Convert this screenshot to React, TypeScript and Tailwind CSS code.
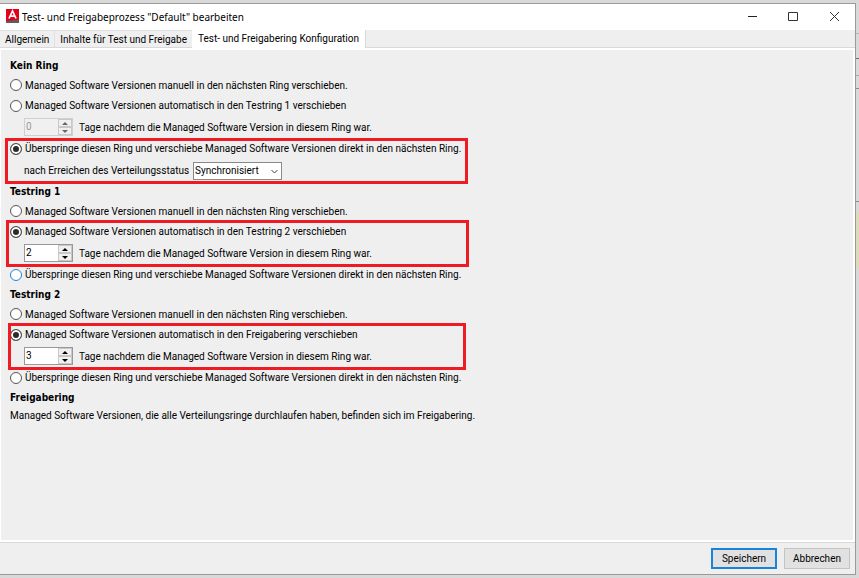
import { useState, type ReactNode } from 'react';

function Title() {
  return (
    <header className="flex h-[26px] shrink-0 items-center bg-white pl-[6px]">
      <svg width="13" height="14" viewBox="0 0 13 14" className="-mt-[2px]" aria-hidden="true">
        <path d="M0 0h13v11L0 13z" fill="#e2001a" />
        <path d="M0 12.2l13-1.6V14H0z" fill="#5c5c5c" />
        <path d="M3 9.5L6.5 2 10 9.5M4.4 7.2h4.2" fill="none" stroke="#fff" strokeWidth="1.7" />
      </svg>
      <h1 className="ml-[3px] flex-1 font-['Noto_Sans',sans-serif] leading-4 text-black">Test- und Freigabeprozess "Default" bearbeiten</h1>
      <button aria-label="Minimieren" className="flex h-full w-[41px] items-center justify-center">
        <svg width="11" height="11" viewBox="0 0 11 11"><path d="M1 4.5h9" stroke="#222" fill="none" /></svg>
      </button>
      <button aria-label="Maximieren" className="flex h-full w-[41px] items-center justify-center">
        <svg width="11" height="11" viewBox="0 0 11 11"><path d="M.5 .5h9v8h-9z" stroke="#333" fill="none" /></svg>
      </button>
      <button aria-label="Schließen" className="flex h-full w-[41px] items-center justify-center">
        <svg width="11" height="11" viewBox="0 0 11 11"><path d="M1 0l9 9M10 0l-9 9" stroke="#333" fill="none" /></svg>
      </button>
    </header>
  );
}

type RadioProps = { name: string; label: string; checked: boolean; onSelect: () => void; height: string; hot?: boolean };

function Radio({ name, label, checked, onSelect, height, hot }: RadioProps) {
  return (
    <label className={`flex items-center gap-[3px] ${height}`}>
      <input
        type="radio"
        name={name}
        checked={checked}
        onChange={onSelect}
        className={`size-3 shrink-0 appearance-none rounded-full border bg-white checked:bg-[#2b2b2b] checked:shadow-[inset_0_0_0_2px_#fff] ${hot ? 'border-[#1a86d9]' : 'border-[#555]'}`}
      />
      <span className="whitespace-nowrap">{label}</span>
    </label>
  );
}

function Days({ id, initial, disabled }: { id: string; initial: number; disabled?: boolean }) {
  const [value, setValue] = useState(initial);
  const step = 'flex h-[8px] w-[14px] items-center justify-center border border-[#c8c8c8] bg-[#f0f0f0]';
  const arrow = disabled ? '#666' : '#000';
  return (
    <div className="flex h-[22px] items-center gap-[6px] pl-[14px]">
      <div className={`flex h-[18px] w-[49px] border ${disabled ? 'border-[#d0d0d0] bg-[#f0f0f0]' : 'border-[#999] bg-white'}`}>
        <input
          id={id}
          value={value}
          disabled={disabled}
          onChange={(e) => setValue(Number(e.target.value) || 0)}
          className="w-0 flex-1 bg-transparent pl-px leading-4 disabled:text-[#9a9a9a]"
        />
        <div className="flex flex-col">
          <button aria-label="Mehr" disabled={disabled} className={step} onClick={() => setValue(value + 1)}>
            <svg width="6" height="3" viewBox="0 0 6 3"><path d="M0 3L3 0l3 3z" fill={arrow} /></svg>
          </button>
          <button aria-label="Weniger" disabled={disabled} className={step} onClick={() => setValue(Math.max(0, value - 1))}>
            <svg width="6" height="3" viewBox="0 0 6 3"><path d="M0 0h6L3 3z" fill={arrow} /></svg>
          </button>
        </div>
      </div>
      <label htmlFor={id} className="whitespace-nowrap">Tage nachdem die Managed Software Version in diesem Ring war.</label>
    </div>
  );
}

function StatusSelect() {
  return (
    <div className="flex h-[23px] items-center gap-1 pl-[14px]">
      <label htmlFor="status" className="whitespace-nowrap">nach Erreichen des Verteilungsstatus</label>
      <div className="relative">
        <select id="status" className="block h-[18px] w-[89px] appearance-none border border-[#8a8a8a] bg-white pl-px">
          <option>Synchronisiert</option>
          <option>Verteilt</option>
        </select>
        <svg width="7" height="5" viewBox="0 0 7 5" className="pointer-events-none absolute top-[7px] right-[4px]" aria-hidden="true">
          <path d="M.5 1l3 3 3-3" fill="none" stroke="#444" />
        </svg>
      </div>
    </div>
  );
}

function Marked({ frame, children }: { frame?: string; children: ReactNode }) {
  return (
    <div className="relative">
      {children}
      {frame && <div className={`pointer-events-none absolute border-3 border-[#ed1c24] ${frame}`} />}
    </div>
  );
}

function Heading({ children }: { children: ReactNode }) {
  return <h2 className="h-[19px] font-['DejaVu_Sans_Condensed',sans-serif] leading-[19px] font-bold">{children}</h2>;
}

type RingProps = { id: string; title: string; auto: string; initial: string; days: number; frame: string; hot?: boolean; children?: ReactNode };

function Ring({ id, title, auto, initial, days, frame, hot, children }: RingProps) {
  const [mode, setMode] = useState(initial);
  return (
    <section>
      <Heading>{title}</Heading>
      <Radio name={id} height="h-5" label="Managed Software Versionen manuell in den nächsten Ring verschieben." checked={mode === 'manual'} onSelect={() => setMode('manual')} />
      <Marked frame={children ? undefined : frame}>
        <Radio name={id} height="h-[21px]" label={auto} checked={mode === 'auto'} onSelect={() => setMode('auto')} />
        <Days id={`${id}-days`} initial={days} disabled={mode !== 'auto'} />
      </Marked>
      <Marked frame={children ? frame : undefined}>
        <Radio name={id} height="h-[21px]" hot={hot} label="Überspringe diesen Ring und verschiebe Managed Software Versionen direkt in den nächsten Ring." checked={mode === 'skip'} onSelect={() => setMode('skip')} />
        {children}
      </Marked>
    </section>
  );
}

export default function App() {
  return (
    <div className="flex min-h-screen bg-[#d9d9d9] pt-[3px] pb-[3px] font-['Roboto','Liberation_Sans',sans-serif] text-[10px] text-black">
      <main className="flex min-w-0 flex-1 flex-col border-t border-r border-b border-[#9a9a9a] bg-[#efefef]">
        <Title />
        <nav role="tablist" className="flex h-[18px] shrink-0 border-b border-[#d9d9d9]">
          <button role="tab" aria-selected="false" className="border-t border-r border-[#e0e0e0] px-[5px]">Allgemein</button>
          <button role="tab" aria-selected="false" className="border-t border-[#e0e0e0] px-[5px]">Inhalte für Test und Freigabe</button>
          <button role="tab" aria-selected="true" className="-mb-px border-r border-[#d9d9d9] bg-white px-[6px] pb-px">Test- und Freigabering Konfiguration</button>
        </nav>
        <div className="flex-1 border-2 border-l border-white px-[9px] pt-[6px]">
          <Ring id="kein" title="Kein Ring" auto="Managed Software Versionen automatisch in den Testring 1 verschieben" initial="skip" days={0} frame="top-0 -bottom-[2px] -left-[5px] w-[463px]">
            <StatusSelect />
          </Ring>
          <Ring id="ring1" title="Testring 1" auto="Managed Software Versionen automatisch in den Testring 2 verschieben" initial="auto" days={2} hot frame="-top-px -bottom-[3px] -left-[4px] w-[463px]" />
          <Ring id="ring2" title="Testring 2" auto="Managed Software Versionen automatisch in den Freigabering verschieben" initial="auto" days={3} frame="-top-px -bottom-[3px] -left-[2px] w-[458px]" />
          <section>
            <Heading>Freigabering</Heading>
            <p className="leading-[18px]">Managed Software Versionen, die alle Verteilungsringe durchlaufen haben, befinden sich im Freigabering.</p>
          </section>
        </div>
        <footer className="flex h-8 shrink-0 items-center justify-end gap-[7px] border-t border-[#d9d9d9] pr-[5px]">
          <button className="h-[21px] w-[66px] border-2 border-[#1a83d8] bg-[#e1e1e1]">Speichern</button>
          <button className="h-[21px] w-[66px] border border-[#c4c4c4] bg-[#e1e1e1]">Abbrechen</button>
        </footer>
      </main>
      <div className="flex w-[3px] flex-col">
        <div className="h-[31px] border-b border-[#b5b5b5]" />
        <div className="h-[25px] border-b border-[#6e6e6e]" />
        <div className="h-[17px] border-b border-[#a8a8a8]" />
        <div className="h-[13px] border-b border-[#8c8c8c]" />
        <div className="h-[113px] border-b border-[#8c8c8c]" />
        <div className="mt-[10px] h-[56px] bg-[#dcdcb8]" />
      </div>
    </div>
  );
}
